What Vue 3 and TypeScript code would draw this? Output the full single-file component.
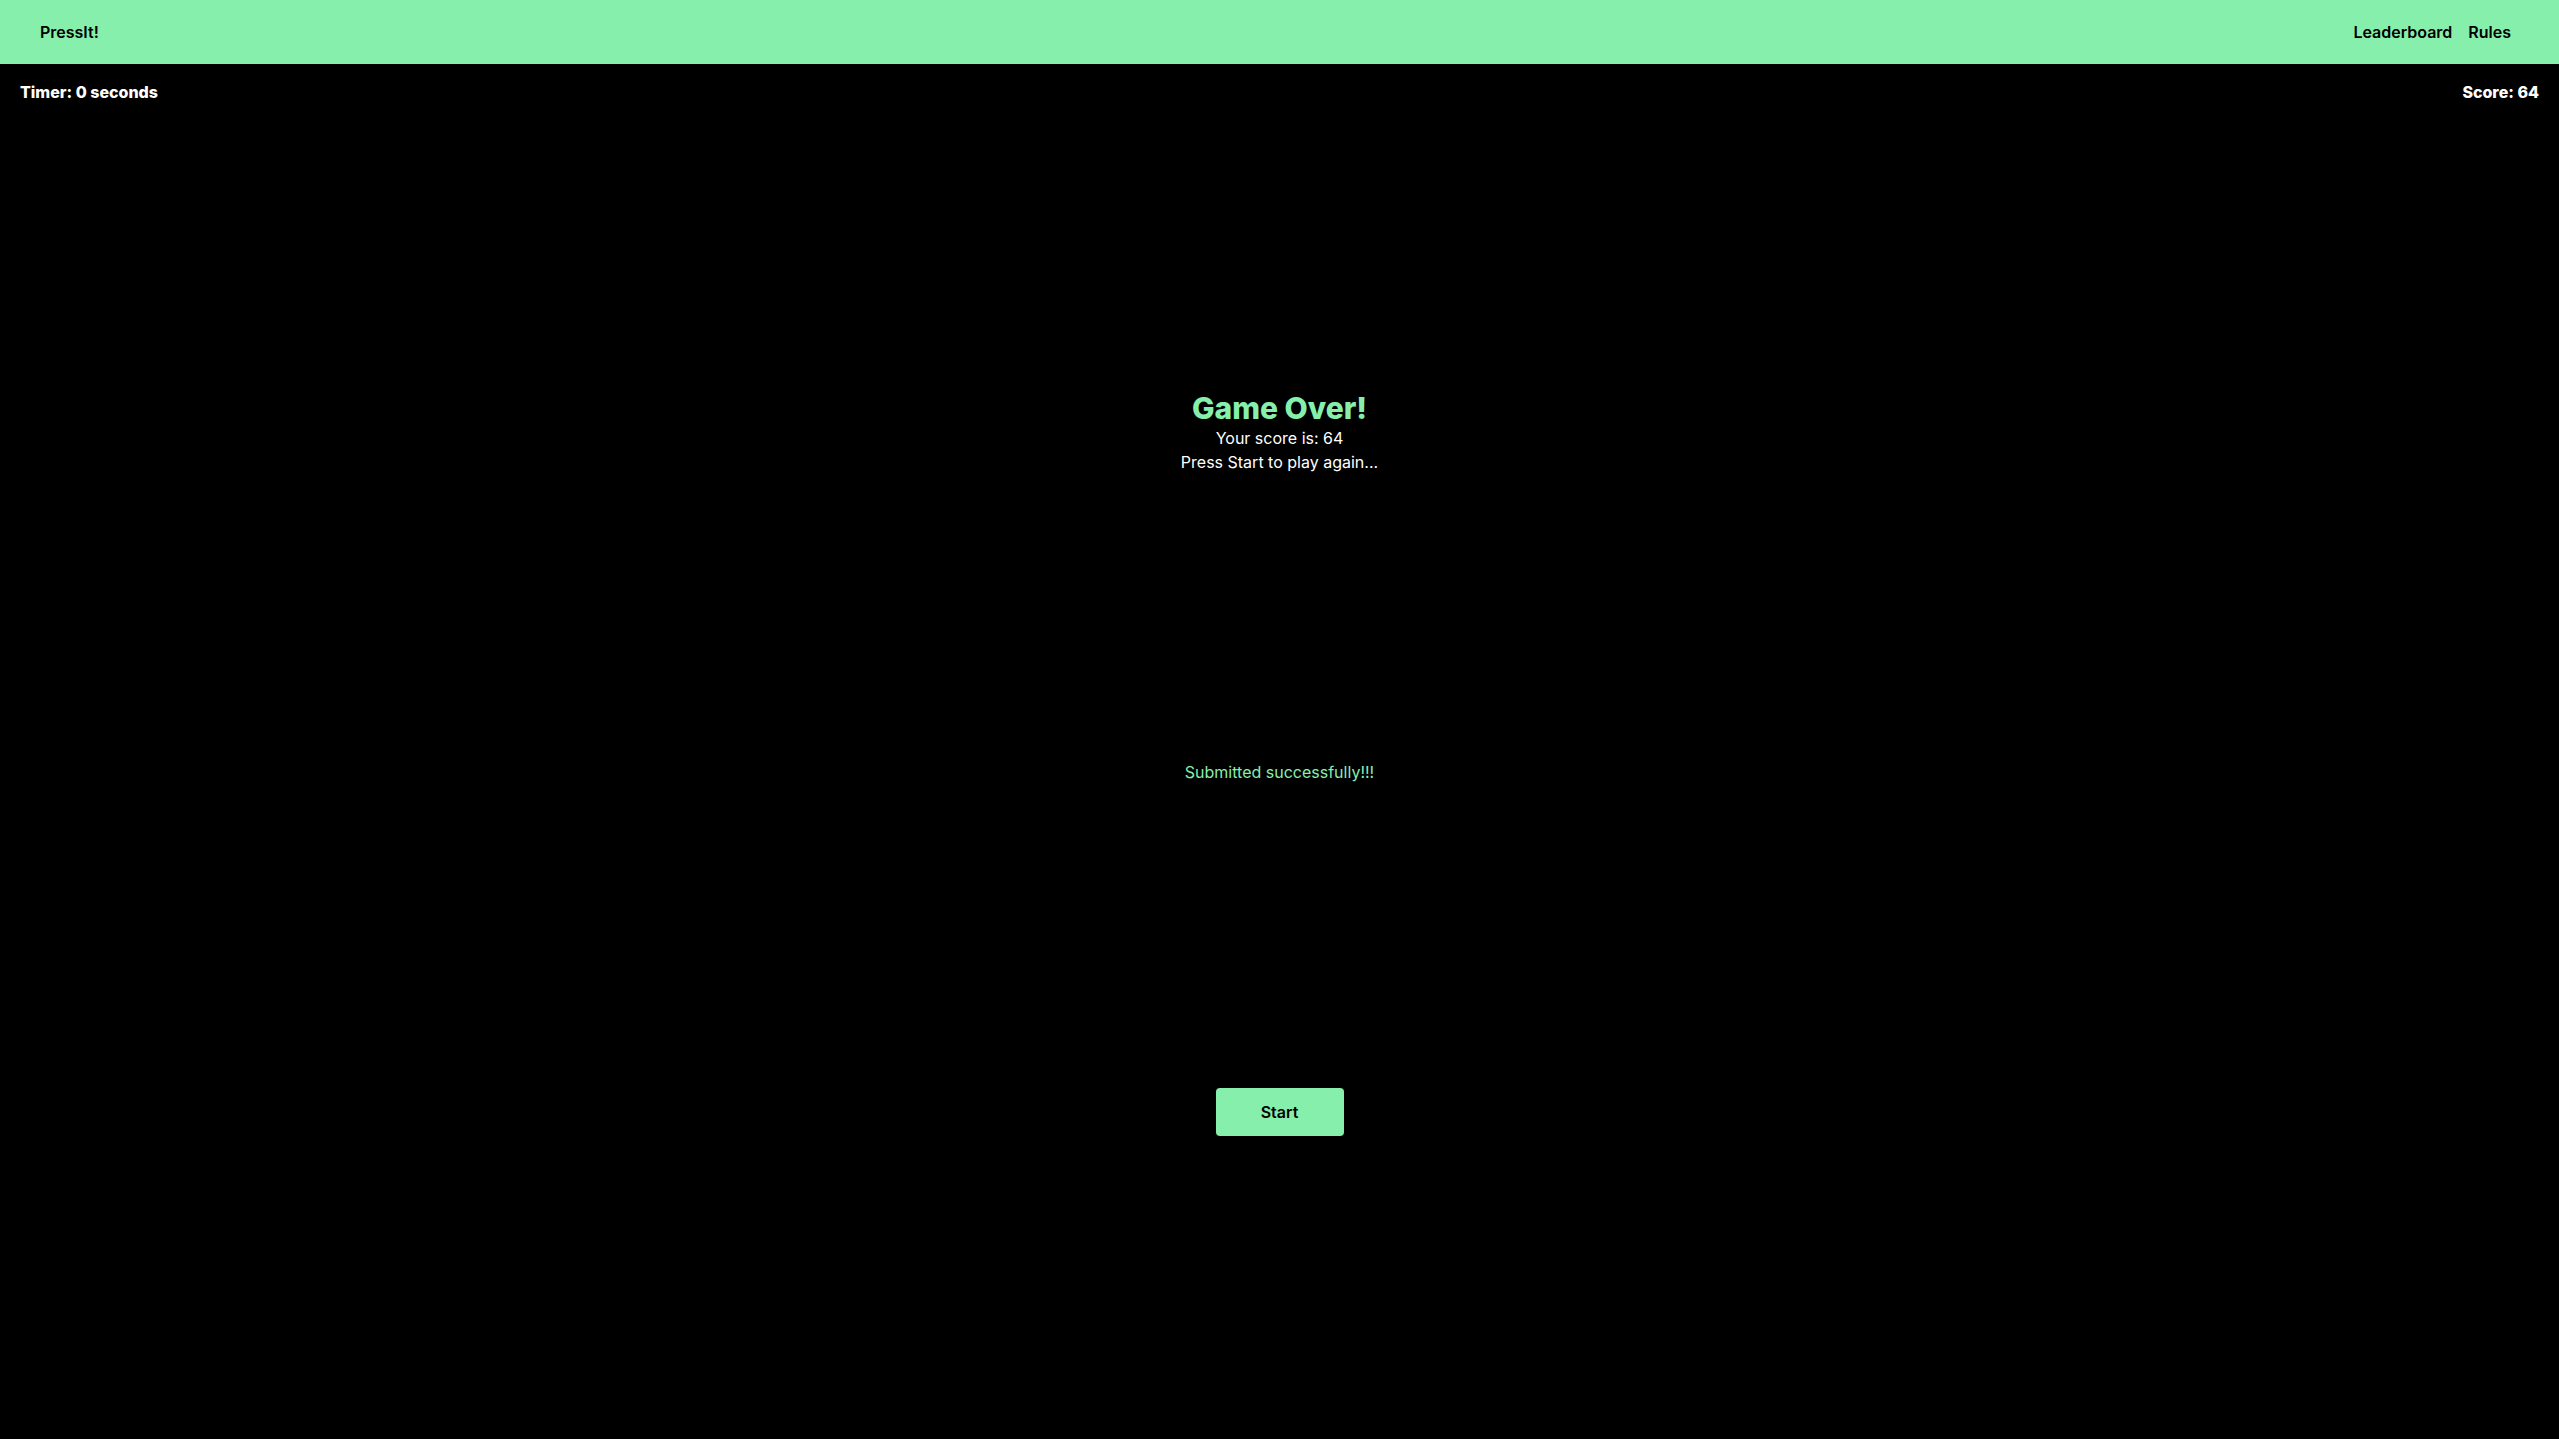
<script setup lang="ts">
import { ref } from 'vue'

const seconds = ref<number>(0)
const score = ref<number>(64)
const links: { label: string; href: string }[] = [
  { label: 'Leaderboard', href: '#leaderboard' },
  { label: 'Rules', href: '#rules' },
]
</script>

<template>
  <div class="page">
    <nav class="nav">
      <a class="link" href="#home">PressIt!</a>
      <div class="links">
        <a v-for="link in links" :key="link.href" class="link" :href="link.href">{{ link.label }}</a>
      </div>
    </nav>
    <div class="status">
      <p>Timer: {{ seconds }} seconds</p>
      <p>Score: {{ score }}</p>
    </div>
    <main class="game">
      <section class="result">
        <h1>Game Over!</h1>
        <p>Your score is: {{ score }}</p>
        <p>Press Start to play again...</p>
      </section>
      <p class="notice">Submitted successfully!!!</p>
      <div class="actions">
        <button class="start" type="button">Start</button>
      </div>
    </main>
  </div>
</template>

<style>
body {
  margin: 0;
  background: #000;
}
</style>

<style scoped>
.page {
  display: flex;
  flex-direction: column;
  min-height: 100vh;
  background: #000;
  color: #fff;
  font-family: Inter, "Liberation Sans", sans-serif;
  font-size: 16px;
  line-height: 24px;
}

h1,
p {
  margin: 0;
}

.nav {
  display: flex;
  align-items: center;
  justify-content: space-between;
  padding: 20px 40px;
  background: #86efac;
}

.links {
  display: flex;
  gap: 16px;
  padding-right: 8px;
}

.link {
  color: #000;
  font-weight: 600;
  text-decoration: none;
}

.status {
  display: flex;
  justify-content: space-between;
  padding: 16px 20px 0;
  font-weight: 800;
}

.game {
  display: flex;
  flex: 1;
  flex-direction: column;
  align-items: center;
  justify-content: space-evenly;
  text-align: center;
}

.result h1 {
  color: #86efac;
  font-size: 30px;
  font-weight: 800;
  line-height: 36px;
}

.notice {
  color: #86efac;
}

.actions {
  padding: 18px 0 17px;
}

.start {
  display: block;
  width: 128px;
  height: 48px;
  padding: 0;
  border: 0;
  border-radius: 4px;
  background: #86efac;
  color: #000;
  font: inherit;
  font-weight: 600;
  cursor: pointer;
}
</style>
